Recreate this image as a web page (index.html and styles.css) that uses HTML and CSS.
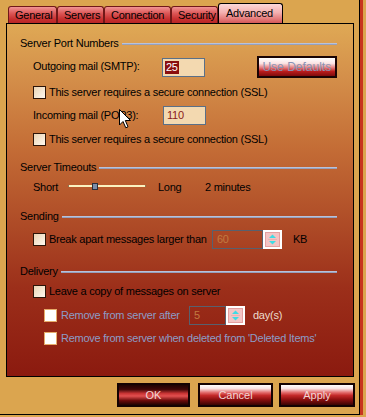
FILE: index.html
```html
<!DOCTYPE html>
<html lang="en">
<head>
    <meta charset="UTF-8">
    <meta name="viewport" content="width=device-width, initial-scale=1.0">
    <title>Account Properties - Advanced</title>
    <link rel="stylesheet" href="styles.css">
</head>
<body>
    <div class="screen">
        <div class="window">
            <div class="tabs">
                <div class="tab tab-general">General</div>
                <div class="tab tab-servers">Servers</div>
                <div class="tab tab-connection">Connection</div>
                <div class="tab tab-security">Security</div>
                <div class="tab tab-advanced tab-active">Advanced</div>
            </div>

            <div class="panel">
                <div class="group-title gt-ports"><span>Server Port Numbers</span><i class="rule"></i></div>

                <div class="row row-smtp">
                    <span class="label">Outgoing mail (SMTP):</span>
                    <div class="field field-port"><span class="selected">25</span></div>
                    <button type="button" class="btn-defaults">Use Defaults</button>
                </div>

                <div class="row check-row cr-ssl1">
                    <span class="check"></span>
                    <span class="check-text">This server requires a secure connection (SSL)</span>
                </div>

                <div class="row row-pop">
                    <span class="label">Incoming mail (POP3):</span>
                    <div class="field field-port"><span class="value">110</span></div>
                </div>

                <div class="row check-row cr-ssl2">
                    <span class="check"></span>
                    <span class="check-text">This server requires a secure connection (SSL)</span>
                </div>

                <div class="group-title gt-timeouts"><span>Server Timeouts</span><i class="rule"></i></div>

                <div class="row row-slider">
                    <span class="slider-label">Short</span>
                    <div class="slider">
                        <span class="track"></span>
                        <span class="thumb"></span>
                    </div>
                    <span class="slider-long">Long</span>
                    <span>2 minutes</span>
                </div>

                <div class="group-title gt-sending"><span>Sending</span><i class="rule"></i></div>

                <div class="row row-break">
                    <span class="check"></span>
                    <span class="check-text break-text">Break apart messages larger than</span>
                    <div class="field field-off field-kb"><span>60</span></div>
                    <svg class="spin" width="19" height="19" viewBox="0 0 19 19">
                        <rect x="1" y="1" width="17" height="17" fill="#f4c4c4" stroke="#fff" stroke-width="2"/>
                        <rect x="2.5" y="2.5" width="14" height="14" fill="none" stroke="#e4a0a0"/>
                        <line x1="5" y1="9.5" x2="14" y2="9.5" stroke="#eab2b2"/>
                        <polygon points="6,8 9.5,4.5 13,8" fill="#3fdbe4"/>
                        <polygon points="6,11 13,11 9.5,14.5" fill="#3fdbe4"/>
                    </svg>
                    <span class="unit-kb">KB</span>
                </div>

                <div class="group-title gt-delivery"><span>Delivery</span><i class="rule"></i></div>

                <div class="row check-row cr-leave">
                    <span class="check"></span>
                    <span class="check-text">Leave a copy of messages on server</span>
                </div>

                <div class="row row-remove">
                    <span class="check check-off"></span>
                    <span class="check-text text-off remove-text">Remove from server after</span>
                    <div class="field field-off field-days"><span>5</span></div>
                    <svg class="spin" width="19" height="19" viewBox="0 0 19 19">
                        <rect x="1" y="1" width="17" height="17" fill="#f4c4c4" stroke="#fff" stroke-width="2"/>
                        <rect x="2.5" y="2.5" width="14" height="14" fill="none" stroke="#e4a0a0"/>
                        <line x1="5" y1="9.5" x2="14" y2="9.5" stroke="#eab2b2"/>
                        <polygon points="6,8 9.5,4.5 13,8" fill="#3fdbe4"/>
                        <polygon points="6,11 13,11 9.5,14.5" fill="#3fdbe4"/>
                    </svg>
                    <span class="unit-days">day(s)</span>
                </div>

                <div class="row check-row cr-deleted">
                    <span class="check check-off"></span>
                    <span class="check-text text-off">Remove from server when deleted from 'Deleted Items'</span>
                </div>
            </div>

            <div class="actions">
                <button type="button" class="btn btn-ok">OK</button>
                <button type="button" class="btn btn-cancel">Cancel</button>
                <button type="button" class="btn btn-apply">Apply</button>
            </div>
        </div>
        <div class="window-edge"></div>
    </div>

    <!-- mouse pointer sitting over the POP3 label -->
    <svg class="pointer" width="13" height="20" viewBox="0 0 13 20">
        <path d="M0.5 0.5 L0.5 16 L4 12.5 L6.8 18.8 L9 17.8 L6.3 11.5 L11.5 11.5 Z" fill="#fff" stroke="#000" stroke-width="1" stroke-linejoin="miter"/>
    </svg>
</body>
</html>
```

FILE: styles.css
```css
body {
    margin: 0;
    background-color: #dba54f;
    font-family: "Liberation Sans", Arial, sans-serif;
    font-size: 11px;
    line-height: 13px;
    letter-spacing: -0.25px;
    color: #000;
}

.screen {
    display: flex;
    width: 366px;
    height: 417px;
    overflow: hidden;
}

.window {
    width: 359px;
    height: 414px;
    border-right: 1px solid #000;
    border-bottom: 1px solid #000;
    flex-shrink: 0;
}

.window-edge {
    width: 3px;
    height: 415px;
    background-color: #c8341f;
}

/* tabs */

.tabs {
    display: flex;
    align-items: flex-end;
    height: 20px;
    padding-top: 3px;
    padding-left: 8px;
}

.tab {
    box-sizing: border-box;
    height: 17px;
    padding: 2px 0 0 6px;
    border: 1px solid #701818;
    border-bottom: none;
    border-radius: 3px 3px 0 0;
    background: linear-gradient(#f19494, #dc5656 40%, #c83030 75%, #b82626);
    white-space: nowrap;
}

.tab-general { width: 49px; }
.tab-servers { width: 47px; }
.tab-connection { width: 67px; }
.tab-security { width: 47px; }
.tab-advanced { width: 65px; }

.tab-active {
    height: 20px;
    padding-top: 3px;
    padding-left: 7px;
    border-color: #000;
    background: linear-gradient(#fcd8d8, #f4b0b0 45%, #e47878 80%, #d45858);
}

/* panel */

.panel {
    box-sizing: border-box;
    width: 348px;
    height: 354px;
    margin-left: 6px;
    padding: 0 16px 0 13px;
    border: 1px solid #000;
    background: linear-gradient(#dfa955 0%, #d48f4a 15%, #c46d36 35%, #b04e28 55%, #9c2f1a 75%, #8b1a0f 100%);
    display: flex;
    flex-direction: column;
}

.group-title {
    display: flex;
    align-items: center;
    height: 13px;
}

.group-title .rule {
    flex: 1;
    height: 1px;
    margin-left: 3px;
    border-bottom: 1px solid #96a0bc;
    background-color: #b8c2da;
}

.gt-ports { margin-top: 13px; }
.gt-timeouts { margin-top: 15px; }
.gt-sending { margin-top: 16px; }
.gt-delivery { margin-top: 16px; }

.row {
    display: flex;
    align-items: center;
    padding-left: 13px;
    white-space: nowrap;
}

.check-row { height: 13px; }

.row-smtp { height: 22px; margin-top: 6px; align-items: flex-start; }
.cr-ssl1 { margin-top: 8px; }
.row-pop { height: 19px; margin-top: 7px; align-items: flex-start; }
.cr-ssl2 { margin-top: 8px; }
.row-slider { height: 13px; margin-top: 7px; }
.row-break { height: 19px; margin-top: 7px; }
.cr-leave { margin-top: 7px; }
.row-remove { height: 19px; margin-top: 8px; padding-left: 24px; }
.cr-deleted { margin-top: 7px; padding-left: 24px; }

.label {
    width: 130px;
    margin-top: 4px;
}

.row-pop .label { margin-top: 3px; }

.field {
    box-sizing: border-box;
    height: 19px;
    padding: 2px 0 0 2px;
    border: 1px solid #5a7088;
    background-color: #f3d9b0;
}

.field-port { width: 43px; }
.row-smtp .field { margin-top: 2px; }

.selected {
    display: inline-block;
    padding: 0 1px;
    background-color: #8a0e0e;
    color: #fff;
}

.value {
    padding-left: 1px;
    color: #8b1a1a;
}

.field-off {
    padding-left: 4px;
    border-color: #58606e;
    background-color: transparent;
    color: #c27a40;
}

.field-kb { width: 51px; }
.field-days { width: 37px; }

.btn-defaults {
    box-sizing: border-box;
    width: 81px;
    height: 22px;
    margin-left: 52px;
    padding: 0;
    border: 2px solid #1a0404;
    background: linear-gradient(#ffffff 0%, #fbe4e4 30%, #e47878 55%, #b81c1c 75%, #7e0c0c 100%);
    font: inherit;
    font-size: 12px;
    letter-spacing: 0;
    color: #8a92b4;
}

/* checkboxes */

.check {
    box-sizing: border-box;
    width: 13px;
    height: 13px;
    flex-shrink: 0;
    border: 1px solid #2c1408;
    background: linear-gradient(135deg, #ead4b4, #fff8ee);
}

.check-text { margin-left: 3px; }

.check-off {
    border-color: #e6ac6a;
    background: #fff;
}

.text-off {
    margin-left: 4px;
    color: #8c9cc6;
}

.break-text { width: 163px; }
.remove-text { width: 128px; }

.unit-kb { margin-left: 11px; }

.unit-days {
    margin-left: 8px;
    color: #ecdccc;
}

/* slider */

.slider-label { width: 35px; }

.slider {
    position: relative;
    width: 78px;
    height: 13px;
}

.track {
    position: absolute;
    left: 0;
    right: 0;
    top: 4px;
    height: 2px;
    border-left: 1px solid #8a7656;
    border-right: 1px solid #8a7656;
    background-color: #fbf3c0;
}

.thumb {
    position: absolute;
    left: 24px;
    top: 2px;
    box-sizing: border-box;
    width: 6px;
    height: 7px;
    border: 1px solid #2a2e3a;
    background-color: #7c8ca8;
}

.slider-long {
    width: 47px;
    margin-left: 12px;
}

/* dialog buttons */

.actions {
    display: flex;
    margin-top: 6px;
    padding-left: 117px;
}

.btn {
    box-sizing: border-box;
    height: 24px;
    padding: 0;
    border: 2px solid #140202;
    font: inherit;
    letter-spacing: 0;
    color: #f0d6d6;
    background: linear-gradient(#ffffff 0%, #f8e2e2 18%, #e26a6a 38%, #c42a2a 52%, #8e1010 72%, #3a0404 100%);
}

.btn-ok {
    width: 73px;
    background: linear-gradient(#1e0303 0%, #3e0707 22%, #c83434 42%, #e25050 55%, #6a0a0a 78%, #1e0303 100%);
}

.btn-cancel {
    width: 75px;
    margin-left: 8px;
}

.btn-apply {
    width: 76px;
    margin-left: 6px;
}

.pointer {
    position: absolute;
    left: 119px;
    top: 109px;
}
```
